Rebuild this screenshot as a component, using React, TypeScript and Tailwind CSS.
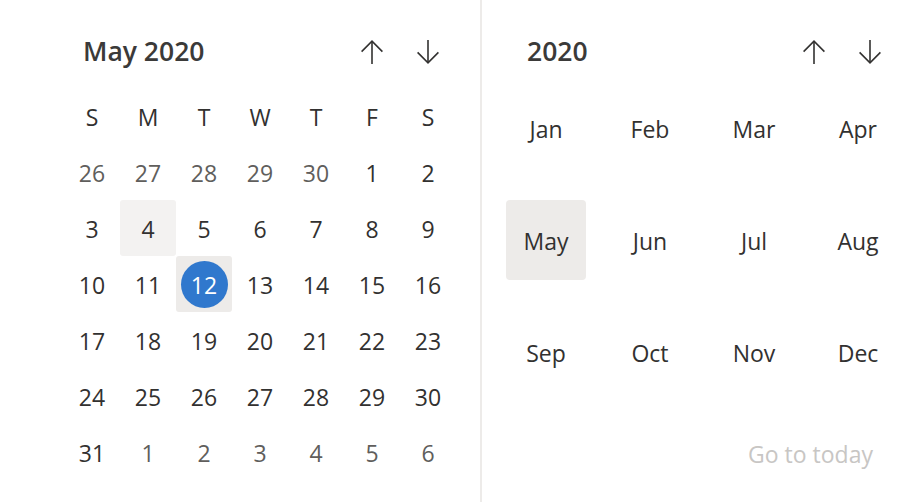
import React from 'react';

const weekdays = ['S', 'M', 'T', 'W', 'T', 'F', 'S'];

type Day = { n: number; out?: boolean };

const days: Day[] = [
  ...[26, 27, 28, 29, 30].map(n => ({ n, out: true })),
  ...Array.from({ length: 31 }, (_, i) => ({ n: i + 1 })),
  ...[1, 2, 3, 4, 5, 6].map(n => ({ n, out: true })),
];

const months = ['Jan', 'Feb', 'Mar', 'Apr', 'May', 'Jun', 'Jul', 'Aug', 'Sep', 'Oct', 'Nov', 'Dec'];

const ArrowUp = () => (
  <svg width="22" height="24" viewBox="0 0 22 24" fill="none" stroke="#323130" strokeWidth="1.6">
    <path d="M11 1.5V24" />
    <path d="M0.6 11.6L11 1.2L21.4 11.6" />
  </svg>
);

const ArrowDown = () => (
  <svg width="22" height="24" viewBox="0 0 22 24" fill="none" stroke="#323130" strokeWidth="1.6">
    <path d="M11 0V22.5" />
    <path d="M0.6 12.4L11 22.8L21.4 12.4" />
  </svg>
);

const NavButtons = () => (
  <div className="flex">
    <button className="w-[56px] h-[56px] flex items-center justify-center">
      <ArrowUp />
    </button>
    <button className="w-[56px] h-[56px] flex items-center justify-center">
      <ArrowDown />
    </button>
  </div>
);

export default function App() {
  return (
    <div
      className="flex w-[924px] h-[502px] bg-white text-[#323130] overflow-hidden"
      style={{ fontFamily: '"Open Sans", "Noto Sans", sans-serif' }}
    >
      {/* day picker */}
      <div className="w-[480px] pl-[64px] pt-6">
        <div className="flex items-center w-[392px] h-[56px]">
          <div className="flex-1 pl-[19px] text-[26.5px] font-semibold text-[#3b3a39]">May 2020</div>
          <NavButtons />
        </div>
        <div className="mt-2 grid grid-cols-7 w-[392px]">
          {weekdays.map((d, i) => (
            <div key={i} className="h-[56px] pt-[2px] flex items-center justify-center text-[23px]">
              {d}
            </div>
          ))}
          {days.map((d, i) => {
            const hover = !d.out && d.n === 4;
            const today = !d.out && d.n === 12;
            return (
              <div
                key={i}
                className={`h-[56px] flex items-center justify-center rounded-[3px] text-[23px] ${
                  today ? '' : 'pt-[2px]'
                } ${hover ? 'bg-[#f3f2f1]' : today ? 'bg-[#edebe9]' : ''} ${d.out ? 'text-[#605e5c]' : ''}`}
              >
                {today ? (
                  <span className="w-[47px] h-[47px] pt-[2px] rounded-full bg-[#3078cd] text-white flex items-center justify-center">
                    {d.n}
                  </span>
                ) : (
                  d.n
                )}
              </div>
            );
          })}
        </div>
      </div>

      {/* month picker */}
      <div className="flex-1 border-l-2 border-[#edebe9] pl-[24px] pt-6">
        <div className="flex items-center w-[392px] h-[56px]">
          <div className="flex-1 pl-[21px] text-[26.5px] font-semibold text-[#3b3a39]">2020</div>
          <NavButtons />
        </div>
        <div className="mt-2 grid grid-cols-4 gap-x-6 gap-y-8 w-[392px]">
          {months.map(m => (
            <div
              key={m}
              className={`h-[80px] pt-[2px] flex items-center justify-center rounded-[4px] text-[23px] ${
                m === 'May' ? 'bg-[#edebe9]' : ''
              }`}
            >
              {m}
            </div>
          ))}
        </div>
        <div className="mt-[46px] w-[392px] flex justify-end pr-[25px] text-[23px] leading-8 text-[#c8c6c4]">
          Go to today
        </div>
      </div>
    </div>
  );
}
